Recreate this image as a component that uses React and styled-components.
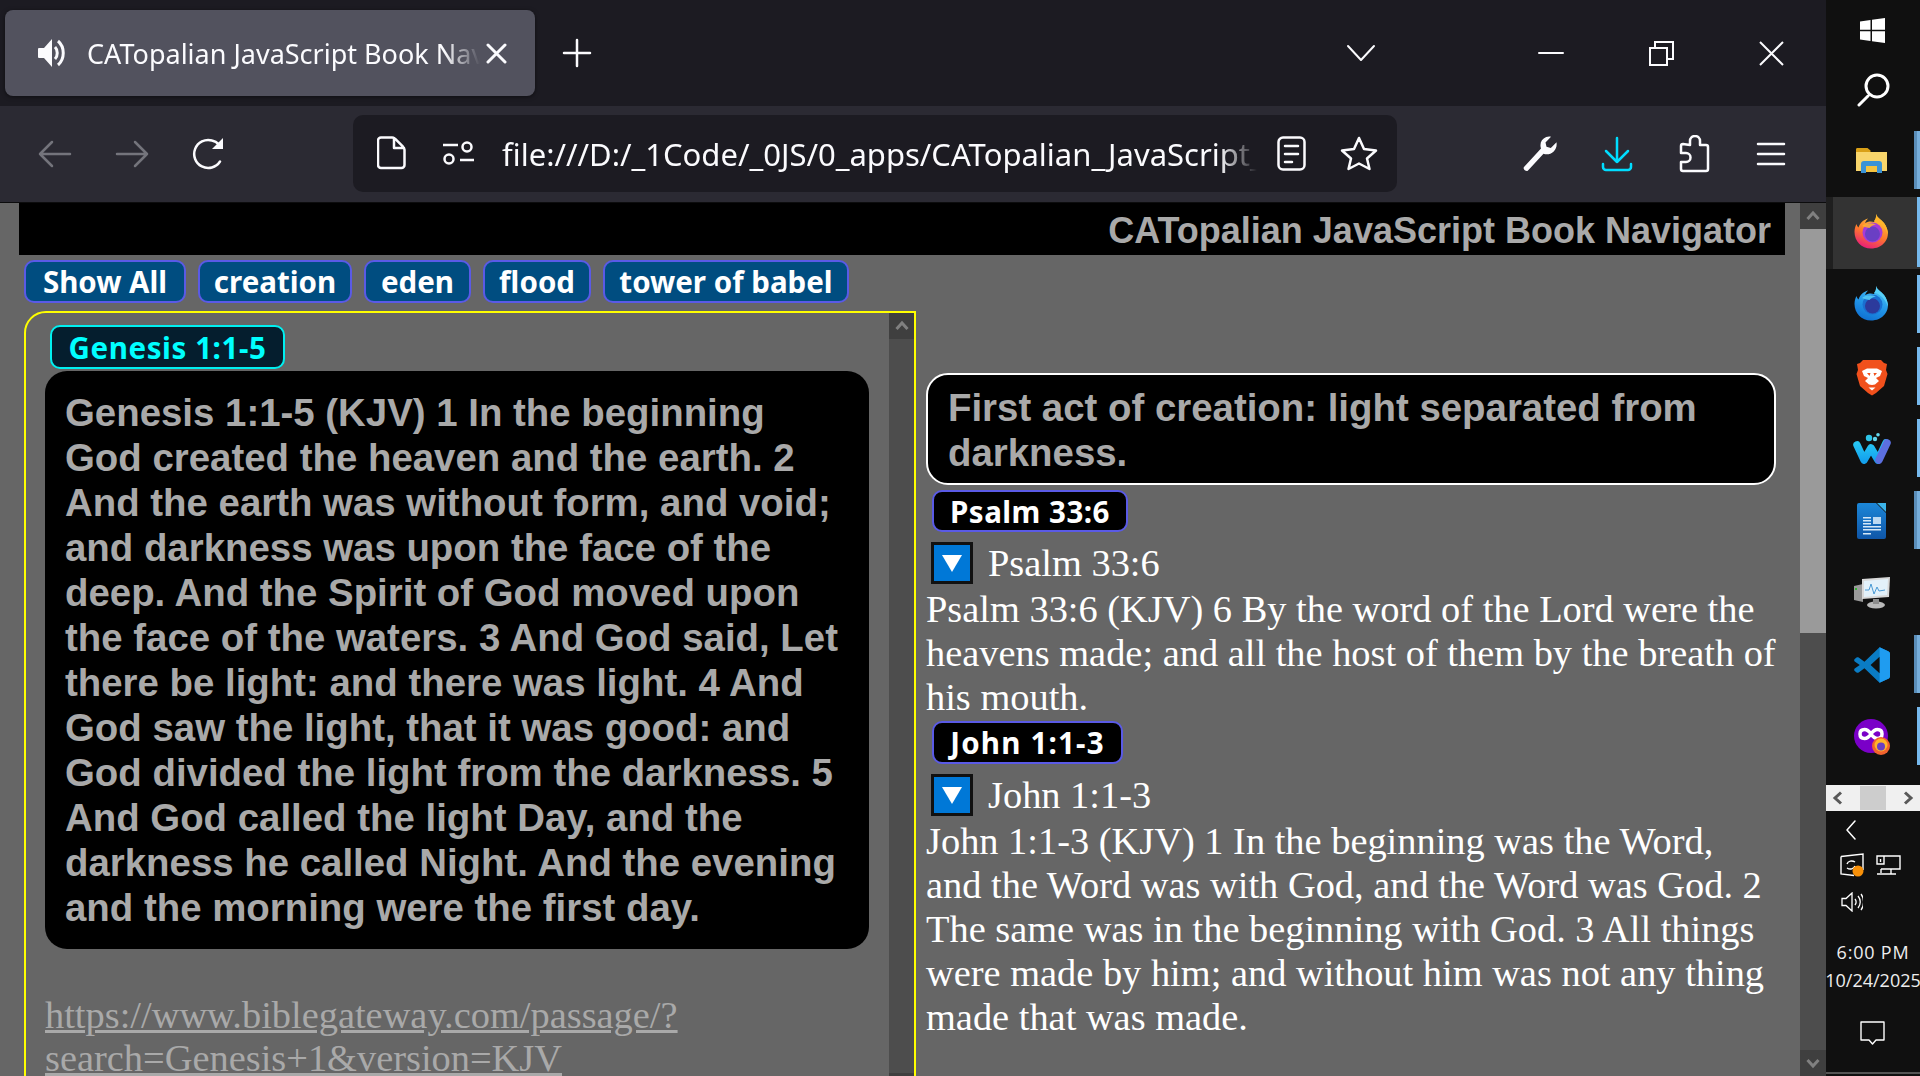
import React from "react";
import styled, { createGlobalStyle } from "styled-components";

const GlobalStyle = createGlobalStyle`
  html, body {
    margin: 0;
    padding: 0;
    width: 1920px;
    height: 1076px;
    overflow: hidden;
    background: #101010;
  }
  * { box-sizing: border-box; }
`;

const Desktop = styled.div`
  display: flex;
  width: 1920px;
  height: 1076px;
  overflow: hidden;
`;

const Browser = styled.div`
  display: flex;
  flex-direction: column;
  width: 1826px;
  height: 1076px;
`;

/* ---------- browser chrome ---------- */

const TabStrip = styled.div`
  display: flex;
  align-items: center;
  height: 106px;
  padding: 10px 0 10px 5px;
  background: #1c1b22;
  color: #fbfbfe;
`;

const Tab = styled.div`
  display: flex;
  align-items: center;
  width: 530px;
  height: 86px;
  padding: 0 28px 0 32px;
  border-radius: 8px;
  background: #52525e;
  box-shadow: 0 1px 4px rgba(0, 0, 0, 0.5);
`;

const TabTitle = styled.span`
  flex: 1;
  margin-left: 20px;
  overflow: hidden;
  white-space: nowrap;
  font: 400 27px "Noto Sans", sans-serif;
  -webkit-mask-image: linear-gradient(to right, #000 91%, transparent 100%);
  mask-image: linear-gradient(to right, #000 91%, transparent 100%);
`;

const NewTab = styled.div`
  display: flex;
  justify-content: center;
  width: 84px;
`;

const StripSpacer = styled.div`
  flex: 1;
`;

const WindowSlot = styled.div`
  display: flex;
  justify-content: center;
  align-items: center;
  width: ${(p) => p.$w || 110}px;
  margin-right: ${(p) => p.$mr || 0}px;
`;

const Toolbar = styled.div`
  display: flex;
  align-items: center;
  justify-content: space-between;
  height: 97px;
  padding: 0 17px 0 16px;
  background: #2b2a33;
  border-bottom: 1px solid #0c0c0d;
  color: #fbfbfe;
`;

const ToolGroup = styled.div`
  display: flex;
  align-items: center;
`;

const ToolSlot = styled.div`
  display: flex;
  justify-content: center;
  align-items: center;
  width: 77px;
  color: ${(p) => p.$color || "inherit"};
`;

const UrlBar = styled.div`
  display: flex;
  align-items: center;
  width: 1044px;
  height: 77px;
  margin-left: 106px;
  margin-bottom: 2px;
  padding: 0 19px 0 24px;
  border-radius: 10px;
  background: #1c1b22;
`;

const UrlText = styled.span`
  flex: 1;
  margin: 2px 20px 0 27px;
  overflow: hidden;
  white-space: nowrap;
  font: 400 31px "Noto Sans", sans-serif;
  -webkit-mask-image: linear-gradient(to right, #000 95%, transparent 100%);
  mask-image: linear-gradient(to right, #000 95%, transparent 100%);
`;

const UrlIcons = styled.div`
  display: flex;
  align-items: center;
  gap: 34px;
`;

const Icon = styled.svg`
  display: block;
  flex: none;
  margin-left: ${(p) => p.$ml || 0}px;
`;

/* ---------- page ---------- */

const PageArea = styled.div`
  display: flex;
  flex: 1;
  min-height: 0;
  background: #666666;
`;

const Page = styled.div`
  flex: 1;
  min-width: 0;
  padding-left: 19px;
  overflow: hidden;
`;

const Banner = styled.header`
  height: 52px;
  width: 1766px;
  padding-right: 14px;
  background: #000;
  color: #a9a9a9;
  text-align: right;
  font: 700 36px/55px "Liberation Sans", Arial, sans-serif;
`;

const FilterRow = styled.nav`
  display: flex;
  gap: 12px;
  margin: 5px 0 8px 5px;
`;

const Pill = styled.button`
  width: ${(p) => p.$w}px;
  height: 43px;
  padding: 0;
  border: 2px solid #5a5ae6;
  border-radius: 10px;
  background: ${(p) => p.$bg || "#004d80"};
  color: ${(p) => p.$fg || "#fff"};
  font: 700 29.5px/37px "Noto Sans", Tahoma, sans-serif;
  letter-spacing: ${(p) => p.$ls || 0}px;
  white-space: nowrap;
  cursor: pointer;
`;

const Columns = styled.main`
  display: flex;
  margin-left: 5px;
  align-items: flex-start;
`;

const LeftPanel = styled.section`
  display: flex;
  flex: none;
  width: 892px;
  height: 790px;
  border: 2px solid #ffff00;
  border-radius: 22px 0 0 0;
`;

const LeftScroll = styled.div`
  flex: 1;
  min-width: 0;
  padding: 12px 20px 0 19px;
  overflow: hidden;
`;

const VerseTag = styled(Pill)`
  display: block;
  height: 44px;
  margin: 0 0 2px 5px;
  border-color: #00f0f0;
`;

const Passage = styled.div`
  padding: 19px 20px;
  border-radius: 22px;
  background: #000;
  color: #a9a9a9;
  font: 700 38.4px/45px "Liberation Sans", Arial, sans-serif;
`;

const SourceLink = styled.a`
  display: block;
  margin-top: 45px;
  color: #a9a9a9;
  font: 400 38.4px/43px "Liberation Serif", "Times New Roman", serif;
  text-decoration: underline;
  overflow-wrap: anywhere;
`;

const RightColumn = styled.section`
  flex: none;
  width: 851px;
  margin-left: 10px;
  padding-top: 62px;
  color: #fff;
  font: 400 38.4px/44px "Liberation Serif", "Times New Roman", serif;
`;

const Note = styled.div`
  width: 850px;
  padding: 10px 20px 8px;
  border: 2px solid #fff;
  border-radius: 22px;
  background: #000;
  color: #a9a9a9;
  font: 700 38.4px/45px "Liberation Sans", Arial, sans-serif;
`;

const RefTag = styled(Pill)`
  display: block;
  height: ${(p) => p.$h}px;
  margin: ${(p) => p.$mt}px 0 0 6px;
`;

const Toggle = styled.div`
  display: flex;
  align-items: center;
  height: 42px;
  margin: 10px 0 3px 5px;
`;

const ToggleBox = styled.span`
  display: flex;
  flex: none;
  justify-content: center;
  align-items: center;
  width: 42px;
  height: 42px;
  margin-right: 15px;
  border: 3px solid #111;
  background: #0078d7;
`;

const Triangle = styled.span`
  width: 0;
  height: 0;
  border-left: 10px solid transparent;
  border-right: 10px solid transparent;
  border-top: 17px solid #fff;
`;

const Verse = styled.p`
  margin: 0;
`;

/* ---------- page scroll bars ---------- */

const ScrollBar = styled.div`
  display: flex;
  flex: none;
  flex-direction: column;
  width: ${(p) => p.$w}px;
  height: 100%;
  background: #4d4d4d;
`;

const ScrollArrow = styled.div`
  display: flex;
  flex: none;
  justify-content: center;
  align-items: center;
  height: 26px;
  background: #3f3f3f;
`;

const ScrollThumb = styled.div`
  flex: none;
  height: 404px;
  background: #9a9a9a;
`;

const ScrollGap = styled.div`
  flex: 1;
`;

/* ---------- windows task bar ---------- */

const TaskBar = styled.aside`
  display: flex;
  flex: none;
  flex-direction: column;
  width: 94px;
  height: 1076px;
  background: #101010;
  color: #fff;
`;

const SystemIcon = styled.div`
  display: flex;
  justify-content: center;
  align-items: center;
  height: ${(p) => p.$h}px;
  margin-bottom: ${(p) => p.$mb || 0}px;
  padding-right: 1px;
`;

const AppSlot = styled.div`
  position: relative;
  display: flex;
  justify-content: center;
  align-items: center;
  height: 72px;
  padding-right: 3px;
  padding-bottom: ${(p) => p.$lift || 0}px;
  background: ${(p) => (p.$active ? "linear-gradient(to right, #1f1f1f 7px, #333 7px)" : "none")};

  &::after {
    content: "";
    display: ${(p) => (p.$open ? "block" : "none")};
    position: absolute;
    right: 0;
    top: ${(p) => (p.$active ? 0 : 6)}px;
    bottom: ${(p) => (p.$active ? 2 : 8)}px;
    width: ${(p) => (p.$double ? 6 : 3)}px;
    background: ${(p) =>
      p.$double ? "linear-gradient(to right, #5a8db8 50%, #76aedb 50%)" : "#76b9ed"};
  }
`;

const ShelfScroll = styled.div`
  display: flex;
  justify-content: space-between;
  align-items: center;
  height: 26px;
  margin-top: 12px;
  padding: 0 5px;
  background: #f0f0f0;
`;

const ShelfThumb = styled.div`
  width: 26px;
  height: 24px;
  background: #cdcdcd;
`;

const Tray = styled.div`
  display: flex;
  flex-direction: column;
  flex: 1;
  align-items: center;
  padding-top: 9px;
`;

const TrayRow = styled.div`
  display: flex;
  align-self: flex-start;
  align-items: center;
  gap: ${(p) => p.$gap || 0}px;
  margin: ${(p) => p.$mt || 0}px 0 0 ${(p) => p.$ml || 0}px;
`;

const Clock = styled.div`
  margin-top: 26px;
  text-align: center;
  font: 400 18px/28px "Open Sans", sans-serif;
  white-space: nowrap;
  color: #eee;
`;

const ClockTime = styled.div`
  letter-spacing: 0.8px;
`;

const ActionCenter = styled.div`
  margin-top: 27px;
  padding-right: 2px;
`;

const BaseLine = styled.div`
  height: 2px;
  margin-bottom: 2px;
  background: #555;
`;

/* ---------- icons ---------- */

const Speaker = () => (
  <Icon width="30" height="30" viewBox="0 0 30 30" fill="currentColor">
    <path d="M2 10h5l8-9v28l-8-9H2a1 1 0 0 1-1-1V11a1 1 0 0 1 1-1z" />
    <path d="M18 9c3 3 3 9 0 12" fill="none" stroke="currentColor" strokeWidth="3" />
    <path d="M21 3c7 6 7 18 0 24" fill="none" stroke="currentColor" strokeWidth="3" />
  </Icon>
);

const Stroke = ({ w, h, d, sw = 2.5, ml, vb }) => (
  <Icon
    $ml={ml}
    width={w}
    height={h}
    viewBox={vb || `0 0 ${w} ${h}`}
    fill="none"
    stroke="currentColor"
    strokeWidth={sw}
    strokeLinecap="round"
    strokeLinejoin="round"
  >
    <path d={d} />
  </Icon>
);

const Wrench = () => (
  <Icon width="36" height="36" viewBox="0 0 36 36" fill="#fbfbfe">
    <path d="M2 31 19 12.500c-1.600-5 .4-9.600 5.200-11.500 1.700-.6 3.200-.7 4.800-.3l-5.500 5.800 1 4.200 4.300 1.200 5.700-5.600c.5 3.400-.2 6.700-2.800 9.100-3 2.800-6.700 3.400-10.200 2.300L6 34.500c-1.800 1.800-5.600-1.400-4-3.500z" />
  </Icon>
);

const StartLogo = () => (
  <Icon width="25" height="25" viewBox="0 0 25 25" fill="#fff">
    <path d="M0 3.500 10.500 2v9.800H0zM12 1.800 25 0v11.800H12zM0 13.300h10.500V23L0 21.500zM12 13.300h13V25l-13-1.800z" />
  </Icon>
);

const FolderLogo = () => (
  <Icon width="33" height="28" viewBox="0 0 33 28">
    <path d="M1 2.500C1 1.500 1.500 1 2.500 1h10l3 2.500V6H1z" fill="#d9a017" />
    <path d="M1 5h31v19H1z" fill="#f8d56b" />
    <path d="M6 26V17a3 3 0 0 1 3-3h15a3 3 0 0 1 3 3v9h-5v-7H11v7z" fill="#3a93d6" />
    <path d="M11 19h11v6H11z" fill="#f4c33f" />
  </Icon>
);

const FoxLogo = ({ id, outer, inner, globe, flame }) => (
  <Icon width="35" height="36" viewBox="0 0 35 36">
    <defs>
      <linearGradient id={id} x1="0.7" y1="0" x2="0.3" y2="1">
        <stop offset="0" stopColor={outer[0]} />
        <stop offset="0.55" stopColor={outer[1]} />
        <stop offset="1" stopColor={outer[2]} />
      </linearGradient>
    </defs>
    <path
      d="M22 1c1 4 5 5 8 9 5 7 5 14 1 19-3.500 4.500-8.500 6.500-14 6.500C7.500 35.500.5 28 .5 19c0-3 .8-6 2-8 .3 1.500 1 2.700 2 3.500C6 9.500 10 6.500 14 5.500c-1.500 1.500-2.500 3-3 4.500 2.500-1.500 6-2 9-1 1.500-2 2.500-5 2-8z"
      fill={`url(#${id})`}
    />
    <path d="M22 1c1 4 5 5 8 9 3 4 4 8 4 12-2-6-5-10-10-13-1-.8-2-.8-4-1 1.500-2 2.500-4 2-7z" fill={flame} />
    <circle cx="18.500" cy="19.500" r="10" fill={inner} />
    <circle cx="18.500" cy="21" r="7.500" fill={globe} />
    <path d="M8 13c4-3 9-3.500 14-1.500-3 .5-5 1.500-6.500 3.500-2.500-.5-5-1-7.500-2z" fill={flame} opacity="0.85" />
  </Icon>
);

const BraveLogo = () => (
  <Icon width="32" height="37" viewBox="0 0 32 37">
    <path d="M7 1h18l3 3 3 1-1 6 1.500 4L28 27l-8 7-4 2.500L12 34l-8-7L.5 15 2 11 1 5l3-1z" fill="#f1501c" />
    <path
      d="M6 12l5-2.500h10L26 12l-2 5-4 2 3 3-4 3.500-3 .5-3-.5L9 22l3-3-4-2zM12.500 28.500h7L16 31.500z"
      fill="#fff"
    />
    <path d="M11 14h3.500l-1 3zM21 14h-3.500l1 3z" fill="#f1501c" />
  </Icon>
);

const WaveLogo = () => (
  <Icon width="38" height="32" viewBox="0 0 38 32">
    <defs>
      <linearGradient id="wave" x1="0" y1="0" x2="0" y2="1">
        <stop offset="0" stopColor="#27c7f4" />
        <stop offset="1" stopColor="#14a2ee" />
      </linearGradient>
    </defs>
    <path
      d="M4 12l7 15 7-12 7 12 8-17"
      fill="none"
      stroke="url(#wave)"
      strokeWidth="7.500"
      strokeLinecap="round"
      strokeLinejoin="round"
    />
    <path d="M26 27l8-17" stroke="#5c6fe0" strokeWidth="7.500" strokeLinecap="round" />
    <circle cx="16" cy="5" r="3.200" fill="#2ec5e8" />
    <circle cx="22" cy="6" r="2.200" fill="#63d8ee" />
    <circle cx="25" cy="1.800" r="1.800" fill="#63d8ee" />
  </Icon>
);

const WriterLogo = () => (
  <Icon width="29" height="36" viewBox="0 0 29 36">
    <defs>
      <linearGradient id="writer" x1="0" y1="0" x2="0" y2="1">
        <stop offset="0" stopColor="#1c87d8" />
        <stop offset="1" stopColor="#0f56a8" />
      </linearGradient>
    </defs>
    <path d="M2 0h17l10 10v24a2 2 0 0 1-2 2H2a2 2 0 0 1-2-2V2a2 2 0 0 1 2-2z" fill="url(#writer)" />
    <path d="M20 0h9v9z" fill="#3bb4ea" />
    <path d="M6 14h8v1.500H6zM6 17h8v1.500H6zM6 20h8v1.500H6zM6 23h18v1.500H6zM6 26h18v1.500H6zM6 30h8v1.500H6z" fill="#d5e8f7" />
    <path d="M16 14h8v7h-8z" fill="#bcd9f2" />
  </Icon>
);

const MonitorLogo = () => (
  <Icon width="36" height="32" viewBox="0 0 36 32">
    <path d="M0 9l9-2v18l-9-2z" fill="#9a9a9a" />
    <path d="M8 2l28-2-1 20-27 2z" fill="#d8d8d8" />
    <path d="M10 4l24-2-1 16-23 2z" fill="#e3f1fa" />
    <path d="M11 13l4 0 2-6 3 10 3-7 2 4 6-1" fill="none" stroke="#4a9ad4" strokeWidth="1" />
    <ellipse cx="22" cy="28" rx="9" ry="3.500" fill="#b9b9b9" />
    <path d="M19 22h6v5h-6z" fill="#8c8c8c" />
    <path d="M1 11h2v2H1z" fill="#35b635" />
  </Icon>
);

const CodeLogo = () => (
  <Icon width="36" height="36" viewBox="0 0 100 100">
    <path d="M71 99 29 59l-16 12c-2 1-4 1-6 0l-5-4c-2-2-2-5 0-7l14-10L2 40c-2-2-2-5 0-7l5-4c2-1 4-1 6 0l16 12L71 1l24 11c3 1 5 4 5 7v62c0 3-2 6-5 7z" fill="#0a7cc4" />
    <path d="M71 1l24 11c3 1 5 4 5 7v62c0 3-2 6-5 7L71 99z" fill="#1f9cf0" />
    <path d="M71 27 46 50l25 23z" fill="#101010" />
  </Icon>
);

const PrivateLogo = () => (
  <Icon width="36" height="36" viewBox="0 0 36 36">
    <circle cx="17" cy="17" r="17" fill="#7a00c8" />
    <path
      d="M17 15c-2-3-4-4.500-6.500-4.500C7.500 10.500 6 12.500 6 15s1.500 4.500 4.500 4.500C13 19.500 15 18 17 15c2-3 4-4.500 6.500-4.500 3 0 4.500 2 4.500 4.500s-1.500 4.500-4.500 4.500C21 19.500 19 18 17 15z"
      fill="none"
      stroke="#fff"
      strokeWidth="3.500"
    />
    <circle cx="27" cy="27" r="9" fill="#f2622e" />
    <circle cx="27" cy="26" r="6.500" fill="#ffb52a" />
    <circle cx="27" cy="27.500" r="4" fill="#6a3fc4" />
  </Icon>
);

const Chevron = ({ left, color = "#595959" }) => (
  <Icon width="14" height="14" viewBox="0 0 14 14" fill="none" stroke={color} strokeWidth="3">
    <path d={left ? "M10 1.500 4 7l6 5.500" : "M4 1.500 10 7l-6 5.500"} />
  </Icon>
);

const ScrollUp = ({ down, color }) => (
  <Icon width="14" height="12" viewBox="0 0 14 12" fill="none" stroke={color} strokeWidth="3">
    <path d={down ? "M1.500 3 7 9l5.500-6" : "M1.500 9 7 3l5.500 6"} />
  </Icon>
);

const filters = [
  { label: "Show All", w: 162 },
  { label: "creation", w: 154 },
  { label: "eden", w: 107 },
  { label: "flood", w: 108 },
  { label: "tower of babel", w: 246 },
];

const apps = [
  { key: "folder", open: true, double: true, logo: <FolderLogo /> },
  {
    key: "firefox",
    open: true,
    active: true,
    lift: 4,
    logo: (
      <FoxLogo
        id="fxA"
        outer={["#ffd23a", "#ff7a2c", "#e8197c"]}
        inner="#a63bd8"
        globe="#6a3fc4"
        flame="#ffb52a"
      />
    ),
  },
  {
    key: "thunderbird",
    open: true,
    lift: 4,
    logo: (
      <FoxLogo
        id="fxB"
        outer={["#4cc6f5", "#2295e8", "#0f6fd0"]}
        inner="#1a6fd0"
        globe="#2c3a9c"
        flame="#58d0f7"
      />
    ),
  },
  { key: "brave", open: true, logo: <BraveLogo /> },
  { key: "waterfox", open: true, logo: <WaveLogo /> },
  { key: "writer", open: true, double: true, logo: <WriterLogo /> },
  { key: "monitor", logo: <MonitorLogo /> },
  { key: "code", open: true, double: true, logo: <CodeLogo /> },
  { key: "private", open: true, logo: <PrivateLogo /> },
];

const App = () => (
  <Desktop>
    <GlobalStyle />
    <Browser>
      <TabStrip>
        <Tab>
          <Speaker />
          <TabTitle>CATopalian JavaScript Book Navigator</TabTitle>
          <Stroke w={21} h={21} sw={3} d="M2 2l17 17M19 2 2 19" ml={6} />
        </Tab>
        <NewTab>
          <Stroke w={30} h={30} d="M15 2v26M2 15h26" />
        </NewTab>
        <StripSpacer />
        <WindowSlot $w={30} $mr={120}>
          <Stroke w={30} h={18} sw={2} d="M2 2l13 14L28 2" />
        </WindowSlot>
        <WindowSlot>
          <Stroke w={26} h={4} sw={2} d="M1 2h24" />
        </WindowSlot>
        <WindowSlot>
          <Icon width="25" height="25" viewBox="0 0 25 25" fill="none" stroke="currentColor" strokeWidth="2">
            <path d="M1 7h17v17H1zM6 7V1h18v17h-6" />
          </Icon>
        </WindowSlot>
        <WindowSlot>
          <Icon width="25" height="25" viewBox="0 0 25 25" fill="none" stroke="currentColor" strokeWidth="2">
            <path d="M1 1l23 23M24 1 1 24" />
          </Icon>
        </WindowSlot>
      </TabStrip>

      <Toolbar>
        <ToolGroup>
          <ToolSlot $color="#74747c">
            <Stroke w={34} h={28} d="M14 2 2 14l12 12M2 14h30" />
          </ToolSlot>
          <ToolSlot $color="#74747c">
            <Stroke w={34} h={28} d="M20 2l12 12-12 12M32 14H2" />
          </ToolSlot>
          <ToolSlot>
            <Icon width="34" height="34" viewBox="0 0 34 34">
              <path
                d="M28 24.500A14 14 0 1 1 20 3.500c3 .7 5 2 7 4"
                fill="none"
                stroke="currentColor"
                strokeWidth="2.500"
                strokeLinecap="round"
              />
              <path d="M31 1v11H20z" fill="currentColor" />
            </Icon>
          </ToolSlot>
          <UrlBar>
            <Stroke w={29} h={34} d="M4 1.500h11c1 0 2 .5 3 1.200l8 8c.8 1 1.500 2 1.500 3V29a3 3 0 0 1-3 3H4a3 3 0 0 1-3-3V4.500a3 3 0 0 1 3-3zM17 2v10h10" />
            <Icon $ml={36} width="33" height="24" viewBox="0 0 33 24" fill="none" stroke="currentColor" strokeWidth="2.500">
              <path d="M1 4h15M18 19h14" />
              <circle cx="25" cy="6" r="4.500" />
              <circle cx="7" cy="18" r="4.500" />
            </Icon>
            <UrlText>file:///D:/_1Code/_0JS/0_apps/CATopalian_JavaScript_Book_Navigator/index.html</UrlText>
            <UrlIcons>
              <Stroke w={29} h={35} d="M6 1.500h17a4.500 4.500 0 0 1 4.500 4.500v23a4.500 4.500 0 0 1-4.500 4.500H6A4.500 4.500 0 0 1 1.500 29V6A4.500 4.500 0 0 1 6 1.500zM8 10h13M8 18h13M8 26h7" />
              <Stroke w={38} h={35} d="M19 2l5 11 12 1.500-9 8 2.500 10.500L19 27.500 8.500 33 11 22.500l-9-8L14 13z" />
            </UrlIcons>
          </UrlBar>
        </ToolGroup>
        <ToolGroup>
          <ToolSlot>
            <Wrench />
          </ToolSlot>
          <ToolSlot $color="#00ddff">
            <Stroke w={32} h={36} d="M16 2v24M5 15l11 11 11-11M2 28v3a3 3 0 0 0 3 3h22a3 3 0 0 0 3-3v-3" />
          </ToolSlot>
          <ToolSlot>
            <Stroke w={32} h={38} d="M12 10V6a5 5 0 0 1 10 0v4h6a2 2 0 0 1 2 2v22a2 2 0 0 1-2 2H5a2 2 0 0 1-2-2v-7h5a4 4 0 0 0 0-9H3v-7a2 2 0 0 1 2-2z" />
          </ToolSlot>
          <ToolSlot>
            <Stroke w={30} h={24} d="M2 2h26M2 12h26M2 22h26" />
          </ToolSlot>
        </ToolGroup>
      </Toolbar>

      <PageArea>
        <Page>
          <Banner>CATopalian JavaScript Book Navigator</Banner>
          <FilterRow>
            {filters.map((f) => (
              <Pill key={f.label} $w={f.w}>
                {f.label}
              </Pill>
            ))}
          </FilterRow>
          <Columns>
            <LeftPanel>
              <LeftScroll>
                <VerseTag $w={235} $ls={0.6} $bg="#051e2e" $fg="#00ffff">
                  Genesis 1:1-5
                </VerseTag>
                <Passage>
                  Genesis 1:1-5 (KJV) 1 In the beginning God created the heaven and the earth. 2 And the earth was
                  without form, and void; and darkness was upon the face of the deep. And the Spirit of God moved upon
                  the face of the waters. 3 And God said, Let there be light: and there was light. 4 And God saw the
                  light, that it was good: and God divided the light from the darkness. 5 And God called the light Day,
                  and the darkness he called Night. And the evening and the morning were the first day.
                </Passage>
                <SourceLink href="#">https://www.biblegateway.com/passage/?search=Genesis+1&amp;version=KJV</SourceLink>
              </LeftScroll>
              <ScrollBar $w={25}>
                <ScrollArrow>
                  <ScrollUp color="#808080" />
                </ScrollArrow>
                <ScrollGap />
                <ScrollArrow>
                  <ScrollUp down color="#808080" />
                </ScrollArrow>
              </ScrollBar>
            </LeftPanel>
            <RightColumn>
              <Note>First act of creation: light separated from darkness.</Note>
              <RefTag $w={196} $ls={0.5} $bg="#000" $mt={5} $h={42}>
                Psalm 33:6
              </RefTag>
              <Toggle>
                <ToggleBox>
                  <Triangle />
                </ToggleBox>
                Psalm 33:6
              </Toggle>
              <Verse>
                Psalm 33:6 (KJV) 6 By the word of the Lord were the heavens made; and all the host of them by the breath
                of his mouth.
              </Verse>
              <RefTag $w={191} $ls={1.2} $bg="#000" $mt={2} $h={43}>
                John 1:1-3
              </RefTag>
              <Toggle>
                <ToggleBox>
                  <Triangle />
                </ToggleBox>
                John 1:1-3
              </Toggle>
              <Verse>
                John 1:1-3 (KJV) 1 In the beginning was the Word, and the Word was with God, and the Word was God. 2 The
                same was in the beginning with God. 3 All things were made by him; and without him was not any thing
                made that was made.
              </Verse>
            </RightColumn>
          </Columns>
        </Page>
        <ScrollBar $w={26}>
          <ScrollArrow>
            <ScrollUp color="#808080" />
          </ScrollArrow>
          <ScrollThumb />
          <ScrollGap />
          <ScrollArrow>
            <ScrollUp down color="#808080" />
          </ScrollArrow>
        </ScrollBar>
      </PageArea>
    </Browser>

    <TaskBar>
      <SystemIcon $h={60}>
        <StartLogo />
      </SystemIcon>
      <SystemIcon $h={59} $mb={6}>
        <Stroke w={34} h={34} sw={3} d="M3 32l9-9M21 24a11 11 0 1 0 0-22 11 11 0 0 0 0 22z" />
      </SystemIcon>
      {apps.map((a) => (
        <AppSlot key={a.key} $open={a.open} $active={a.active} $double={a.double} $lift={a.lift}>
          {a.logo}
        </AppSlot>
      ))}
      <ShelfScroll>
        <Chevron left />
        <ShelfThumb />
        <Chevron />
      </ShelfScroll>
      <Tray>
        <TrayRow $ml={19}>
          <Stroke w={12} h={20} sw={1.5} d="M10 1 2 10l8 9" />
        </TrayRow>
        <TrayRow $ml={14} $mt={13} $gap={11}>
          <Icon width="25" height="24" viewBox="0 0 25 24" fill="none" stroke="#fff" strokeWidth="1.400">
            <path d="M1 3.500 23 1v16M1 3.500V21l13 1.500" />
            <path d="M7 11c1-3 5-4 8-2M15 13c-1 3-5 4-8 2" />
            <circle cx="18" cy="18" r="5.500" fill="#f79009" stroke="none" />
          </Icon>
          <Icon width="25" height="20" viewBox="0 0 25 20" fill="none" stroke="#fff" strokeWidth="1.400">
            <path d="M6 1h18v13H5M5 14v4M1 19h9M1 1h7v8H1zM4.500 4v3M15 14v5M10 19h10" />
          </Icon>
        </TrayRow>
        <TrayRow $ml={15} $mt={15}>
          <Icon width="22" height="20" viewBox="0 0 22 20" fill="none" stroke="#fff" strokeWidth="1.300">
            <path d="M1 6.500h4L11 1v18l-6-5.500H1zM14 7c1.500 2 1.500 4 0 6M17 4c3 3.500 3 8.500 0 12M20 2c3.500 4.500 3.500 11.500 0 16" />
          </Icon>
        </TrayRow>
        <Clock>
          <ClockTime>6:00 PM</ClockTime>
          10/24/2025
        </Clock>
        <ActionCenter>
          <Stroke w={25} h={24} sw={1.4} d="M1 1h23v18h-8l-3.500 4L9 19H1z" />
        </ActionCenter>
      </Tray>
      <BaseLine />
    </TaskBar>
  </Desktop>
);

export default App;
